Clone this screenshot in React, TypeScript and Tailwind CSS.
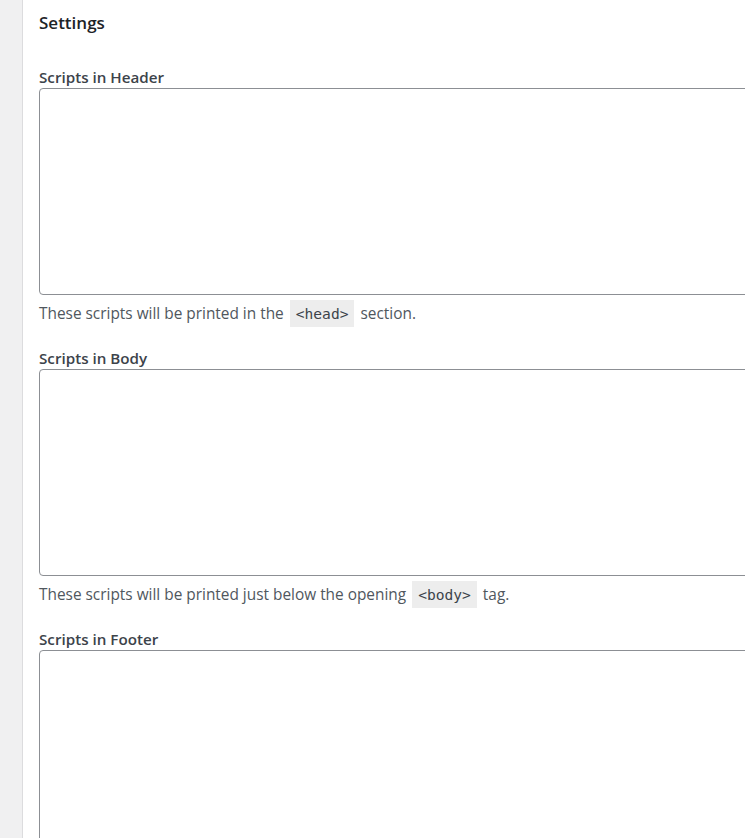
import React from 'react';

const fields = [
  {
    label: 'Scripts in Header',
    before: 'These scripts will be printed in the',
    code: '<head>',
    after: 'section.',
  },
  {
    label: 'Scripts in Body',
    before: 'These scripts will be printed just below the opening',
    code: '<body>',
    after: 'tag.',
  },
  {
    label: 'Scripts in Footer',
    before: '',
    code: '',
    after: '',
  },
];

const App = () => {
  return (
    <div className="flex h-[838px] w-[745px] overflow-hidden bg-white font-['Open_Sans',sans-serif] text-[#3c434a]">
      <div className="w-[23px] shrink-0 border-r border-[#dcdcde] bg-[#f0f0f1]" />
      <div className="flex-1 pl-[16px] pt-[12px]">
        <h2 className="text-[17px] font-semibold leading-[22px] text-[#1d2327]">Settings</h2>

        <div className="mt-[34px]">
          {fields.map((f) => (
            <div key={f.label} className="mb-[22px]">
              <label className="block pb-[1px] text-[15.2px] font-semibold leading-[19px] text-[#3c434a]">
                {f.label}
              </label>
              <textarea
                className="block h-[207px] w-[740px] resize-none rounded-[4px] border border-[#8c8f94] bg-white"
                readOnly
              />
              {f.code && (
                <p className="mt-[6px] text-[15.4px] leading-[26px] text-[#50575e]">
                  {f.before}{' '}
                  <code className="mx-[2px] bg-[#ededed] px-[6px] py-[5px] font-['DejaVu_Sans_Mono',monospace] text-[14.6px] text-[#3c434a]">
                    {f.code}
                  </code>{' '}
                  {f.after}
                </p>
              )}
            </div>
          ))}
        </div>
      </div>
    </div>
  );
};

export default App;
